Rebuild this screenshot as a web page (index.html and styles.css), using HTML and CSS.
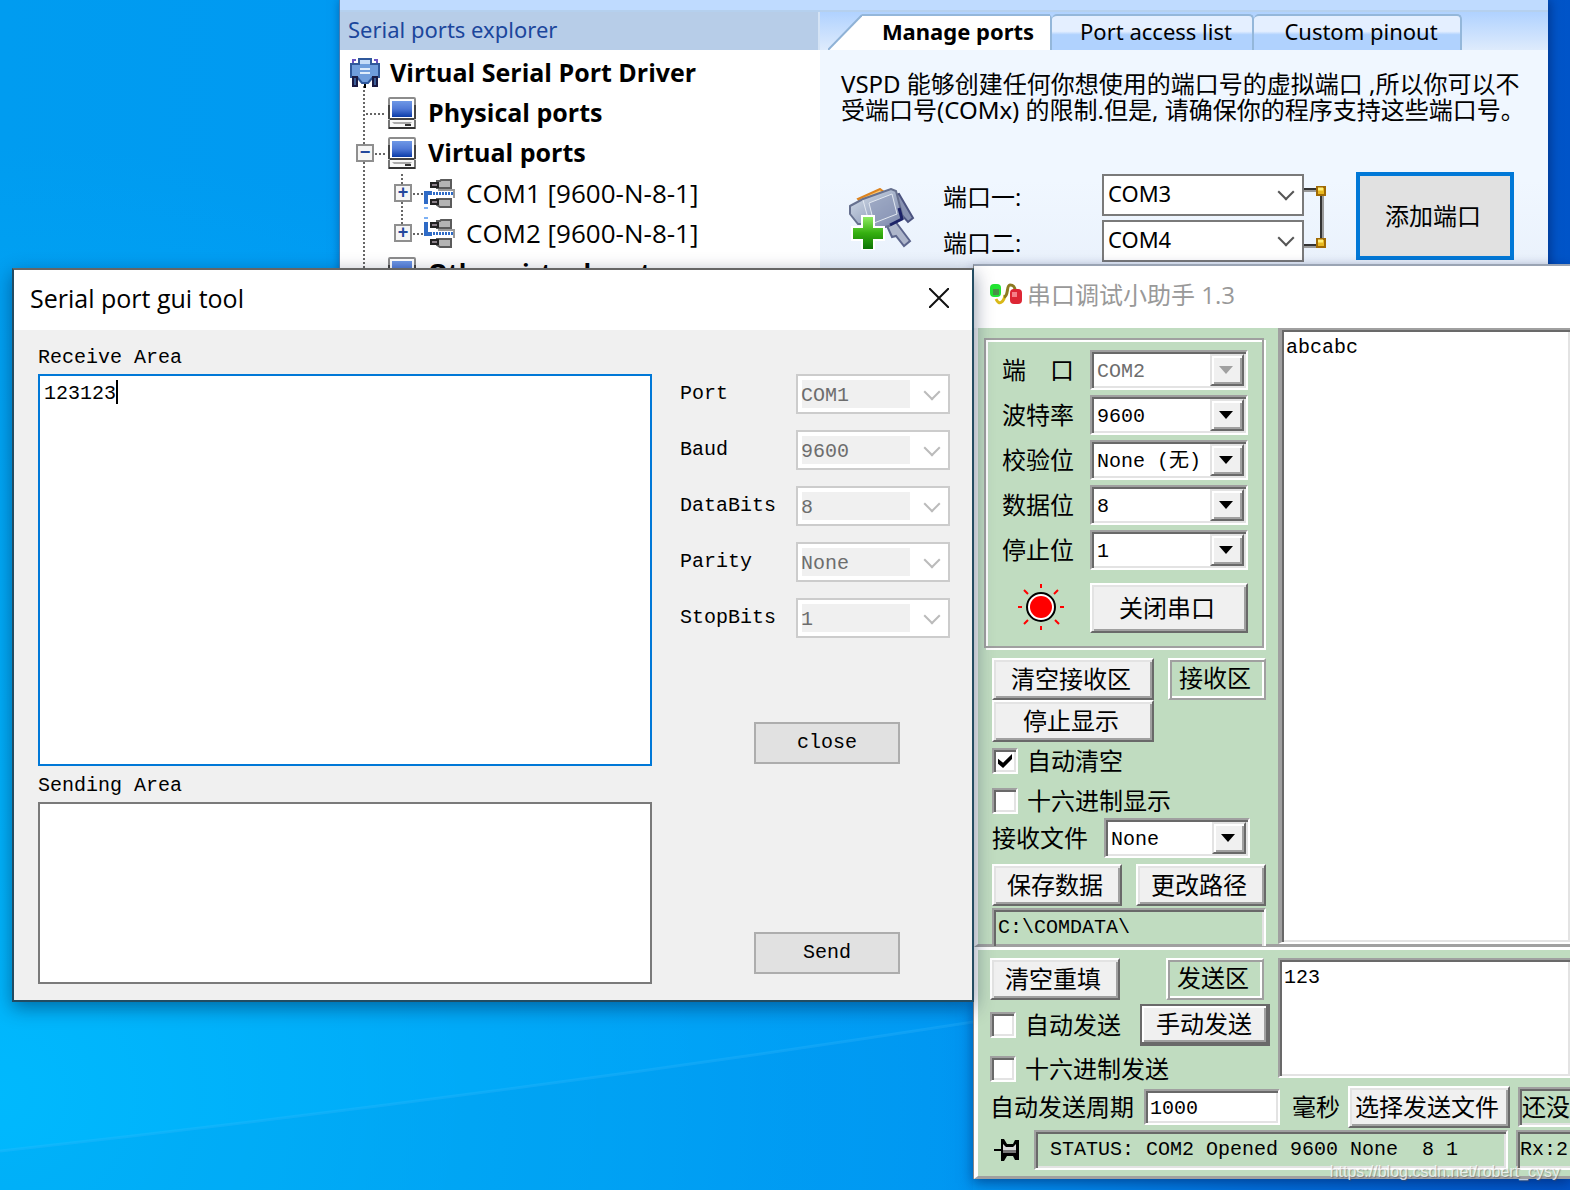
FILE: index.html
```html
<!DOCTYPE html>
<html lang="zh-CN">
<head>
<meta charset="utf-8">
<title>Serial port tools</title>
<link rel="stylesheet" href="styles.css">
</head>
<body>
<svg class="symbols" aria-hidden="true">
  <defs>
    <linearGradient id="screen" x1="0" y1="0" x2="0" y2="1"><stop offset="0" stop-color="#6f98e6"/><stop offset=".5" stop-color="#5079d6"/><stop offset="1" stop-color="#0a3ba8"/></linearGradient>
    <linearGradient id="leaf" x1="0" y1="0" x2="0" y2="1"><stop offset="0" stop-color="#8fea62"/><stop offset=".5" stop-color="#35b010"/><stop offset="1" stop-color="#0d7405"/></linearGradient>
    <linearGradient id="steel" x1="0" y1="0" x2="1" y2="1"><stop offset="0" stop-color="#dbe4ee"/><stop offset=".5" stop-color="#a4b0c8"/><stop offset="1" stop-color="#747fa6"/></linearGradient>
    <symbol id="computer" viewBox="0 0 28 32">
      <rect x="1" y="1" width="26" height="21" rx="1" fill="#fff" stroke="#8c8c8c" stroke-width="2"/>
      <rect x="4" y="4" width="20" height="16" fill="url(#screen)"/>
      <path d="M2 22h24M27 8v14M1 8v14" stroke="#444" stroke-width="2"/>
      <path d="M1 23v8h26v-8" fill="#f8f8f8" stroke="#777" stroke-width="2"/>
      <path d="M1 31h26" stroke="#333" stroke-width="2"/>
      <path d="M4 25h20l-2 2H6z" fill="#aaa"/><path d="M17 28h6" stroke="#333" stroke-width="2"/>
    </symbol>
    <symbol id="plug" viewBox="0 0 32 30">
      <path d="M11 2h3l1-1h10v8H11zM11 20h14v8H14l-3-2z" fill="#b4b4b4" stroke="#5b5b5b" stroke-width="2"/>
      <path d="M5 4h7v4H5zM5 21h7v4H5z" fill="#8a8088" stroke="#222" stroke-width="2"/>
      <path d="M4 10h24v9H4z" fill="#fff"/><path d="M12 11h16v8" fill="none" stroke="#999" stroke-width="2"/>
      <path d="M4 14.500h24" stroke="#2f6bc6" stroke-width="3" stroke-dasharray="2 1"/>
    </symbol>
  </defs>
</svg>
<main class="desktop">
  <svg class="light-beam" viewBox="0 0 980 240" preserveAspectRatio="none" aria-hidden="true"><path d="M0 201Q500 146 980 72V240H0z" fill="#0080dc" fill-opacity=".1"/><path d="M0 201Q500 146 980 72" fill="none" stroke="#4cc4ff" stroke-opacity=".2" stroke-width="3"/></svg>

  <section class="window vspd">
    <div class="vspd-strip"></div>
    <div class="vspd-body">
      <aside class="explorer">
        <h2 class="explorer-title">Serial ports explorer</h2>
        <div class="tree-wrap">
          <svg class="tree-lines" width="90" height="230" aria-hidden="true"><path d="M24 36v194M26 64h20M35 104h12M62 124v50M73 144h12M73 184h12" fill="none" stroke="#666" stroke-width="2" stroke-dasharray="2 2"/></svg>
          <ul class="tree">
            <li class="node root"><svg width="30" height="32" viewBox="0 0 30 32" aria-hidden="true"><path d="M3 7V3h3M27 7V3h-3" fill="none" stroke="#6b55c4" stroke-width="2"/><path d="M9 2h12v5h8v13h-6l-5 6h-6l-5-6H1V7h8z" fill="#6f9ddc" stroke="#2f589b" stroke-width="2"/><path d="M10 3h10v4H10z" fill="#c5dcf8"/><path d="M10 12h10M10 16h10" stroke="#dfecfb" stroke-width="2"/><path d="M3 20h4v9H3zM23 20h4v9h-4z" fill="#3d5f99" stroke="#1b1b44" stroke-width="2"/><path d="M15 27v4" stroke="#000" stroke-width="2"/></svg><b>Virtual Serial Port Driver</b></li>
            <li class="node group"><span class="expander none"></span><svg width="28" height="32" aria-hidden="true"><use href="#computer"/></svg><b>Physical ports</b></li>
            <li class="node group"><span class="expander">−</span><svg width="28" height="32" aria-hidden="true"><use href="#computer"/></svg><b>Virtual ports</b></li>
            <li class="node leaf"><span class="expander plus">+</span><svg width="34" height="32" viewBox="0 0 34 32" aria-hidden="true"><use href="#plug" x="2" y="2" width="32" height="30"/><path d="M8 16H2v11" fill="none" stroke="#2f6bc6" stroke-width="4"/><path d="M0 31h4" stroke="#7db1f5" stroke-width="2"/></svg><span>COM1 [9600-N-8-1]</span></li>
            <li class="node leaf"><span class="expander plus">+</span><svg width="34" height="32" viewBox="0 0 34 32" aria-hidden="true"><use href="#plug" x="2" y="2" width="32" height="30"/><path d="M8 17H2V5" fill="none" stroke="#2f6bc6" stroke-width="4"/><path d="M0 1h4" stroke="#7db1f5" stroke-width="2"/></svg><span>COM2 [9600-N-8-1]</span></li>
            <li class="node group"><span class="expander none"></span><svg width="28" height="32" aria-hidden="true"><use href="#computer"/></svg><b>Other virtual ports</b></li>
          </ul>
        </div>
      </aside>
      <div class="manager">
        <nav class="tabs">
          <button class="tab active"><svg class="slant" width="34" height="36" viewBox="0 0 34 36" aria-hidden="true"><path d="M0 36L34 1V36z" fill="#fff"/><path d="M0 36L34 1" stroke="#8fb2d6" stroke-width="2"/></svg><span>Manage ports</span></button>
          <button class="tab">Port access list</button>
          <button class="tab">Custom pinout</button>
        </nav>
        <p class="intro">VSPD 能够创建任何你想使用的端口号的虚拟端口 ,所以你可以不<br>受端口号(COMx) 的限制.但是, 请确保你的程序支持这些端口号。</p>
        <div class="pair">
          <svg class="pair-icon" width="66" height="62" viewBox="0 0 66 62" aria-hidden="true"><path d="M38 38l8-5 15 20-6 5-8-10-4 1z" fill="#aeb6cb" stroke="#5c658c" stroke-width="2"/><path d="M44 8l6-2 14 24-5 4-9-10z" fill="#8892b2" stroke="#4c5480" stroke-width="2"/><path d="M9 11L31 1l4 3-22 12z" fill="#ffc76e" stroke="#dd8420" stroke-width="2"/><path d="M1 18l13-7L42 1l5 2 7 27-14 8-12 3-8-5H9L1 26z" fill="url(#steel)" stroke="#67718f" stroke-width="2"/><path d="M14 12l6 22M20 15l23-9 5 20-23 9z" fill="#8d9ab9" fill-opacity=".6" stroke="#e2e8f1"/><path d="M50 20l3 11-12 6" fill="none" stroke="#1d2368" stroke-width="3"/><path d="M14 29h10v11h10v11H24v10H14V51H4V40h10z" fill="url(#leaf)" stroke="#fff" stroke-width="4" paint-order="stroke"/></svg>
          <div class="pair-fields">
            <label for="p1">端口一:</label><span class="combo flat"><select id="p1"><option>COM3</option></select></span>
            <label for="p2">端口二:</label><span class="combo flat"><select id="p2"><option>COM4</option></select></span>
          </div>
          <svg class="link" width="22" height="64" viewBox="0 0 22 64" aria-hidden="true"><path d="M0 4h14M18 8v46M0 60h14" stroke="#9a9a9a" stroke-width="4"/><path d="M0 3h14M17 8v46M0 59h14" stroke="#333" stroke-width="2"/><path d="M13 1h8v8h-8zM13 53h8v8h-8z" fill="#e8b820" stroke="#a06a04" stroke-width="2"/><path d="M14 3h5M14 55h5" stroke="#ffee78" stroke-width="3"/></svg>
          <button class="add-pair">添加端口</button>
        </div>
      </div>
    </div>
  </section>

  <section class="window helper">
    <header class="helper-title"><svg width="34" height="26" viewBox="0 0 34 26" aria-hidden="true"><path d="M7 17c3 7 8 3 9-4" fill="none" stroke="#d9b818" stroke-width="3"/><path d="M15 15c5-1 2-12 6-12s5 2 5 6" fill="none" stroke="#8d7a22" stroke-width="3"/><rect x="1" y="2" width="11" height="13" rx="4" fill="#22e532"/><path d="M4 7h6v6H4z" fill="#4a9048"/><rect x="21" y="7" width="12" height="15" rx="4" fill="#dd2634"/><path d="M23 10h5v5h-5z" fill="#f58088"/></svg><h1>串口调试小助手 1.3</h1></header>
    <div class="receive-pane">
      <div class="receive-controls">
        <form class="port-group">
          <div class="field"><label for="h1">端&#12288;口</label><span class="combo classic off"><select id="h1" disabled><option>COM2</option></select></span></div>
          <div class="field"><label for="h2">波特率</label><span class="combo classic"><select id="h2"><option>9600</option></select></span></div>
          <div class="field"><label for="h3">校验位</label><span class="combo classic"><select id="h3"><option>None (无)</option></select></span></div>
          <div class="field"><label for="h4">数据位</label><span class="combo classic"><select id="h4"><option>8</option></select></span></div>
          <div class="field"><label for="h5">停止位</label><span class="combo classic"><select id="h5"><option>1</option></select></span></div>
          <div class="field toggle"><svg class="lamp" width="86" height="50" viewBox="0 0 86 50" aria-hidden="true"><circle cx="39" cy="24" r="14" fill="#fff" stroke="#000" stroke-width="2"/><circle cx="39" cy="24" r="11" fill="red"/><path d="M39 1v4M39 43v4M16 24h4M58 24h4M22 7l4 4M56 7l-4 4M22 41l4-4M57 41l-4-4" stroke="red" stroke-width="2"/></svg><button type="button" class="raised port-toggle">关闭串口</button></div>
        </form>
        <div class="receive-tools">
          <div class="row spread"><button class="raised wide">清空接收区</button><span class="badge">接收区</span></div>
          <button class="raised wide">停止显示</button>
          <label class="check first"><input type="checkbox" checked>自动清空</label>
          <label class="check"><input type="checkbox">十六进制显示</label>
          <div class="row file-row"><label for="h6">接收文件</label><span class="combo classic"><select id="h6"><option>None</option></select></span></div>
          <div class="row spread save-row"><button class="raised half">保存数据</button><button class="raised half">更改路径</button></div>
          <output class="path">C:\COMDATA\</output>
        </div>
      </div>
      <textarea class="sunken received" aria-label="接收区">abcabc</textarea>
    </div>
    <div class="send-pane">
      <div class="send-top">
        <div class="send-controls">
          <div class="row spread badge-row"><button class="raised half">清空重填</button><span class="badge">发送区</span></div>
          <div class="row spread manual-row"><label class="check"><input type="checkbox">自动发送</label><button class="raised default">手动发送</button></div>
          <label class="check hex"><input type="checkbox">十六进制发送</label>
        </div>
        <textarea class="sunken outgoing" aria-label="发送区">123</textarea>
      </div>
      <div class="row period-row"><label for="period">自动发送周期</label><input id="period" class="sunken period" value="1000"><span class="unit">毫秒</span><button class="raised wide">选择发送文件</button><output class="status file">还没</output></div>
      <div class="row status-row"><svg width="26" height="24" viewBox="0 0 26 24" aria-hidden="true"><path d="M0 12h8" stroke="#000" stroke-width="2"/><path d="M7 1h3l3 5h6l2-4h4v20h-4l-2-4h-6l-3 5H7z" fill="#000"/><path d="M9 6l3 3h7l3-3v6H9z" fill="#d8d8d8"/><path d="M9 12h13v3H9z" fill="#777"/></svg><output class="status main-status">STATUS: COM2 Opened 9600 None&nbsp; 8 1</output><output class="status">Rx:2</output></div>
    </div>
  </section>

  <section class="window gui">
    <header class="gui-title"><h1>Serial port gui tool</h1><button class="close-x" aria-label="Close"><svg width="20" height="20" viewBox="0 0 20 20" aria-hidden="true"><path d="M0 0l20 20M20 0L0 20" stroke="#111" stroke-width="2"/></svg></button></header>
    <div class="gui-body">
      <div class="areas">
        <label for="recv">Receive Area</label>
        <div class="focus-box"><textarea id="recv">123123</textarea></div>
        <label for="send">Sending Area</label>
        <textarea id="send"></textarea>
      </div>
      <form class="settings">
        <div class="fields">
          <label for="g1">Port</label><span class="combo flat muted"><select id="g1" disabled><option>COM1</option></select></span>
          <label for="g2">Baud</label><span class="combo flat muted"><select id="g2" disabled><option>9600</option></select></span>
          <label for="g3">DataBits</label><span class="combo flat muted"><select id="g3" disabled><option>8</option></select></span>
          <label for="g4">Parity</label><span class="combo flat muted"><select id="g4" disabled><option>None</option></select></span>
          <label for="g5">StopBits</label><span class="combo flat muted"><select id="g5" disabled><option>1</option></select></span>
        </div>
        <button type="button" class="plain">close</button>
        <button type="button" class="plain last">Send</button>
      </form>
    </div>
  </section>
  <a class="watermark" href="https://blog.csdn.net/robert_cysy">https://blog.csdn.net/robert_cysy</a>
</main>
</body>
</html>
```

FILE: styles.css
```css
:root {
  --ui: "Open Sans", "Noto Sans CJK SC", sans-serif;
  --fixed: "Liberation Mono", "Noto Sans CJK SC", monospace;
  --green: #c0dcc0;
}

*, *::before, *::after { box-sizing: border-box; }

body {
  margin: 0;
  font-family: var(--ui);
  color: #000;
}

h1, h2, p, ul { margin: 0; padding: 0; font-weight: 400; }
button, input, select, textarea { font: inherit; color: inherit; border-radius: 0; margin: 0; }
svg { flex: none; display: block; }
textarea { resize: none; display: block; outline: 0; background: #fff; }
.symbols { position: absolute; width: 0; height: 0; }

.desktop {
  position: relative;
  min-height: 100vh;
  overflow: hidden;
  background:
    radial-gradient(ellipse 65% 80% at 0% 92%, rgba(0, 188, 255, .9), rgba(0, 180, 255, 0)),
    linear-gradient(90deg, #009cf0 0%, #0099f2 30%, #0098f4 60%, #0070dc 80%, #0054c8 100%);
}

.light-beam { position: absolute; left: 0; bottom: 0; width: 62%; height: 240px; }
.window { position: absolute; }
.row { display: flex; align-items: center; }
.spread { justify-content: space-between; }

/* Drop-downs */
.combo { position: relative; display: block; height: 40px; }
.combo select {
  appearance: none;
  display: block;
  width: 100%;
  height: 100%;
  padding: 0 4px 4px;
  border: 2px solid #7a7a7a;
  background: #fff;
  opacity: 1;
}
.combo.flat::after {
  content: "";
  position: absolute;
  right: 12px;
  top: 12px;
  width: 12px;
  height: 12px;
  border: solid #555;
  border-width: 0 2px 2px 0;
  transform: rotate(45deg);
  pointer-events: none;
}
.combo.muted select {
  padding: 0 3px 6px;
  border-color: #ccc;
  color: #6d6d6d;
  background: linear-gradient(#f0f0f0, #f0f0f0) 4px 4px / 108px 28px no-repeat #fff;
}
.combo.muted::after { border-color: #bbb; }
.combo.classic { width: 158px; }
.combo.classic select, .sunken {
  border: 2px solid;
  border-color: #a0a0a0 #fff #fff #a0a0a0;
  box-shadow: inset 2px 2px #696969, inset -2px -2px #e3e3e3;
}
.combo.classic select { padding: 2px 5px 0; font-family: var(--fixed); font-size: 20px; }
.combo.classic::before {
  content: "";
  position: absolute;
  right: 4px;
  top: 4px;
  bottom: 4px;
  width: 34px;
  background: #f0f0f0;
  border: 2px solid;
  border-color: #e3e3e3 #696969 #696969 #e3e3e3;
  box-shadow: inset 2px 2px #fff, inset -2px -2px #a0a0a0;
  pointer-events: none;
}
.combo.classic::after {
  content: "";
  position: absolute;
  right: 15px;
  top: 16px;
  border: 7px solid transparent;
  border-top: 8px solid #000;
  border-bottom: 0;
  pointer-events: none;
}
.combo.off select { color: #6d6d6d; }
.combo.off::after { border-top-color: #a0a0a0; }

/* Port driver window */
.vspd {
  left: 339px;
  right: 22px;
  top: 0;
  height: 300px;
  overflow: hidden;
  background: #f0f7ff;
  border-left: 1px solid #4a7bb0;
  box-shadow: 2px 0 10px rgba(0, 20, 80, .5);
}
.vspd-strip { height: 10px; background: #bfdbff; }
.vspd-body { display: flex; border-top: 2px solid #b5d0ee; }
.explorer { width: 480px; background: #fff; }
.explorer-title {
  height: 38px;
  padding-left: 8px;
  border-right: 2px solid #d4e3f5;
  background: #b7cde8;
  color: #1b469c;
  font: 22px/34px "Noto Sans", sans-serif;
}
.tree-wrap { position: relative; }
.tree-lines { position: absolute; left: 0; top: 0; }
.tree { position: relative; list-style: none; padding-top: 3px; font-size: 25px; line-height: 38px; }
.node { display: flex; align-items: center; height: 40px; white-space: nowrap; }
.node b { font-weight: 700; height: 40px; }
.root { padding-left: 10px; gap: 10px; }
.group { padding-left: 16px; gap: 12px; }
.group .expander { margin-right: 2px; }
.leaf { padding-left: 54px; gap: 10px; font-size: 26px; }
.leaf .expander { margin-right: 2px; }
.leaf svg { margin-right: -2px; }
.expander {
  width: 18px;
  height: 18px;
  border: 2px solid #8f8f8f;
  background: #f5f5f5;
  color: #24489c;
  font: 700 18px/13px "Liberation Sans", sans-serif;
  text-align: center;
}
.expander.none { visibility: hidden; }
.manager { flex: 1; min-width: 0; background: linear-gradient(#f0f7ff 60%, #e8f0fb); }
.tabs { display: flex; height: 38px; padding: 2px 0 0 8px; background: linear-gradient(#b0d2ff, #deebfc); }
.tab {
  width: 202px;
  padding: 0 0 0 8px;
  border: solid #94b7da;
  border-width: 2px 2px 0 0;
  border-radius: 5px 5px 0 0;
  background: linear-gradient(#e4efff 45%, #b0d2fe 55%);
  font: 22px/30px "Noto Sans", sans-serif;
}
.tab:not(.active) { padding-bottom: 4px; }
.tab.active { display: flex; width: 224px; padding: 0; border-left: 0; border-top: 0; background: none; font-weight: 700; }
.tab.active span { flex: 1; height: 36px; background: #fff; border-top: 2px solid #94b7da; padding-left: 4px; }
.tab:last-child { width: 208px; }
.intro { padding: 21px 0 0 21px; font: 24px/26px "Noto Sans", "Noto Sans CJK SC", sans-serif; white-space: nowrap; }
.pair { display: flex; padding: 49px 34px 0 29px; }
.pair-icon { margin: 16px 28px 0 0; }
.pair-fields {
  display: grid;
  grid-template-columns: 159px 202px;
  row-gap: 4px;
  padding-top: 2px;
  align-items: center;
  font-size: 24px;
}
.pair-fields .combo { height: 42px; }
.pair-fields select { font: 22px "Noto Sans", sans-serif; }
.link { margin-top: 14px; }
.add-pair { width: 158px; height: 88px; margin-left: auto; padding: 0 6px 4px 2px; border: 4px solid #0078d7; background: #e1e1e1; font-size: 24px; }

/* Serial helper window */
.helper {
  left: 973px;
  right: 0;
  top: 264px;
  border-top: 2px solid #9aa4b4;
  border-left: 1px solid #888;
  background: var(--green);
  font-size: 24px;
  line-height: 36px;
  white-space: nowrap;
  box-shadow: 0 4px 12px rgba(0, 20, 80, .5);
}
.helper-title { display: flex; align-items: center; gap: 4px; height: 62px; padding: 0 0 4px 15px; background: #fff; color: #999; }
.helper-title h1 { font-size: 24px; }
.receive-pane { display: flex; height: 619px; border-left: 4px solid #f4f4f4; border-bottom: 3px solid #a0a0a0; }
.receive-controls { width: 300px; padding: 10px 12px 0 6px; }
.port-group {
  display: flex;
  flex-direction: column;
  gap: 5px;
  padding: 10px 14px 11px 16px;
  border: 2px solid #a0a0a0;
  box-shadow: inset 2px 2px #fff, 2px 2px #fff;
  width: 280px;
  height: 310px;
}
.field { display: flex; align-items: center; }
.field label { width: 88px; }
.toggle { margin-top: 8px; }
.raised {
  height: 42px;
  padding: 0 4px 0 0;
  border: 2px solid;
  border-color: #fff #696969 #696969 #fff;
  background: #f0f0f0;
  box-shadow: inset 2px 2px #e3e3e3, inset -2px -2px #a0a0a0;
  line-height: 34px;
}
.port-toggle { width: 158px; height: 50px; margin-left: 2px; }
.wide { width: 162px; }
.half { width: 130px; }
.default { width: 130px; border-color: #696969; border-width: 2px 4px 4px 2px; padding: 0; box-shadow: inset 2px 2px #fff, inset -2px -2px #a0a0a0; }
.badge {
  width: 98px;
  height: 42px;
  padding-right: 4px;
  border: 2px solid;
  border-color: #fff #a0a0a0 #a0a0a0 #fff;
  box-shadow: inset 2px 2px #a0a0a0, inset -2px -2px #fff;
  text-align: center;
}
.receive-tools { padding: 10px 0 0 8px; display: flex; flex-direction: column; align-items: flex-start; }
.receive-tools .spread { width: 100%; }
.check { display: flex; align-items: center; gap: 9px; height: 26px; }
.check.first { margin: 6px 0 14px; }
.check input {
  appearance: none;
  position: relative;
  width: 26px;
  height: 26px;
  background: #fff;
  border: 2px solid;
  border-color: #a0a0a0 #fff #fff #a0a0a0;
  box-shadow: inset 2px 2px #696969, inset -2px -2px #e3e3e3;
}
.check input:checked::after {
  content: "";
  position: absolute;
  left: 4px;
  top: 4px;
  width: 14px;
  height: 14px;
  background: #000;
  clip-path: polygon(0 34%, 36% 62%, 100% 0, 100% 36%, 36% 100%, 0 70%);
}
.file-row { gap: 16px; margin: 4px 0 6px; }
.file-row .combo { width: 146px; }
.path, .status {
  height: 40px;
  padding-left: 4px;
  border: 2px solid;
  border-color: #a0a0a0 #fff #fff #a0a0a0;
  box-shadow: inset 2px 2px #696969, inset -2px -2px #e3e3e3;
  font: 20px/36px var(--fixed);
}
.path { width: 100%; height: 38px; margin-top: 2px; border-bottom: 0; box-shadow: inset 2px 2px #696969, inset -2px 0 #e3e3e3; }
.sunken { padding: 6px 4px; font: 20px/24px var(--fixed); }
.received, .outgoing { flex: 1; min-width: 0; border-right: 0; }
.received { border-width: 2px 0 2px 4px; }
.send-pane {
  padding: 8px 0 6px 12px;
  border: solid #fff;
  border-width: 3px 0 0 4px;
  border-bottom: 3px solid #a0a0a0;
}
.send-top { display: flex; gap: 8px; }
.send-controls { width: 280px; }
.badge-row { padding-right: 6px; }
.manual-row { margin: 4px 0 10px; }
.outgoing { height: 120px; }
.period-row { height: 42px; margin-top: 4px; }
.period { width: 136px; height: 36px; margin-left: 10px; padding: 2px 4px 0; }
.unit { margin: 0 8px 0 12px; }
.period-row .status, .status-row .status:last-child { flex: 1; margin-left: 8px; border-right: 0; min-width: 0; box-shadow: inset 2px 2px #696969, inset 0 -2px #e3e3e3; padding-left: 2px; }
.status-row { margin-top: 2px; padding-left: 4px; }
.status.file { font-size: 24px; line-height: 34px; font-family: "Noto Sans CJK SC", sans-serif; }
.main-status { width: 474px; margin-left: 14px; padding-left: 14px; }

/* Serial port gui tool window */
.gui {
  left: 12px;
  top: 268px;
  width: 962px;
  border: 2px solid #234c62;
  border-top-color: #666;
  background: #f0f0f0;
  box-shadow: 0 6px 18px rgba(0, 20, 60, .45);
}
.gui-title { display: flex; align-items: center; justify-content: space-between; height: 60px; padding: 0 23px 4px 16px; background: #fff; }
.gui-title h1 { font-size: 25px; }
.close-x { padding: 0; border: 0; background: none; }
.gui-body { display: flex; gap: 28px; padding: 8px 22px 16px 24px; font: 20px/36px var(--fixed); }
.areas { flex: 1; }
.areas label { display: block; height: 36px; line-height: 40px; }
.areas textarea { width: 100%; height: 182px; padding: 6px 4px; border: 2px solid #7a7a7a; line-height: 24px; }
.focus-box { position: relative; }
.focus-box textarea { height: 392px; border-color: #0078d7; }
.focus-box::after { content: ""; position: absolute; left: 78px; top: 6px; width: 2px; height: 24px; background: #000; }
.settings { display: flex; flex-direction: column; width: 270px; padding-top: 36px; }
.fields { display: grid; grid-template-columns: 116px 154px; row-gap: 16px; line-height: 40px; }
.plain { align-self: flex-start; width: 146px; height: 42px; margin: 84px 0 0 74px; padding: 0; border: 2px solid #adadad; background: #e1e1e1; }
.plain.last { margin-top: auto; margin-bottom: 10px; }

.watermark { position: absolute; right: 10px; bottom: 8px; color: rgba(255, 255, 255, .75); font: 16px/20px "Liberation Sans", sans-serif; text-decoration: none; text-shadow: 1px 1px 1px rgba(80, 80, 80, .5); }
```
